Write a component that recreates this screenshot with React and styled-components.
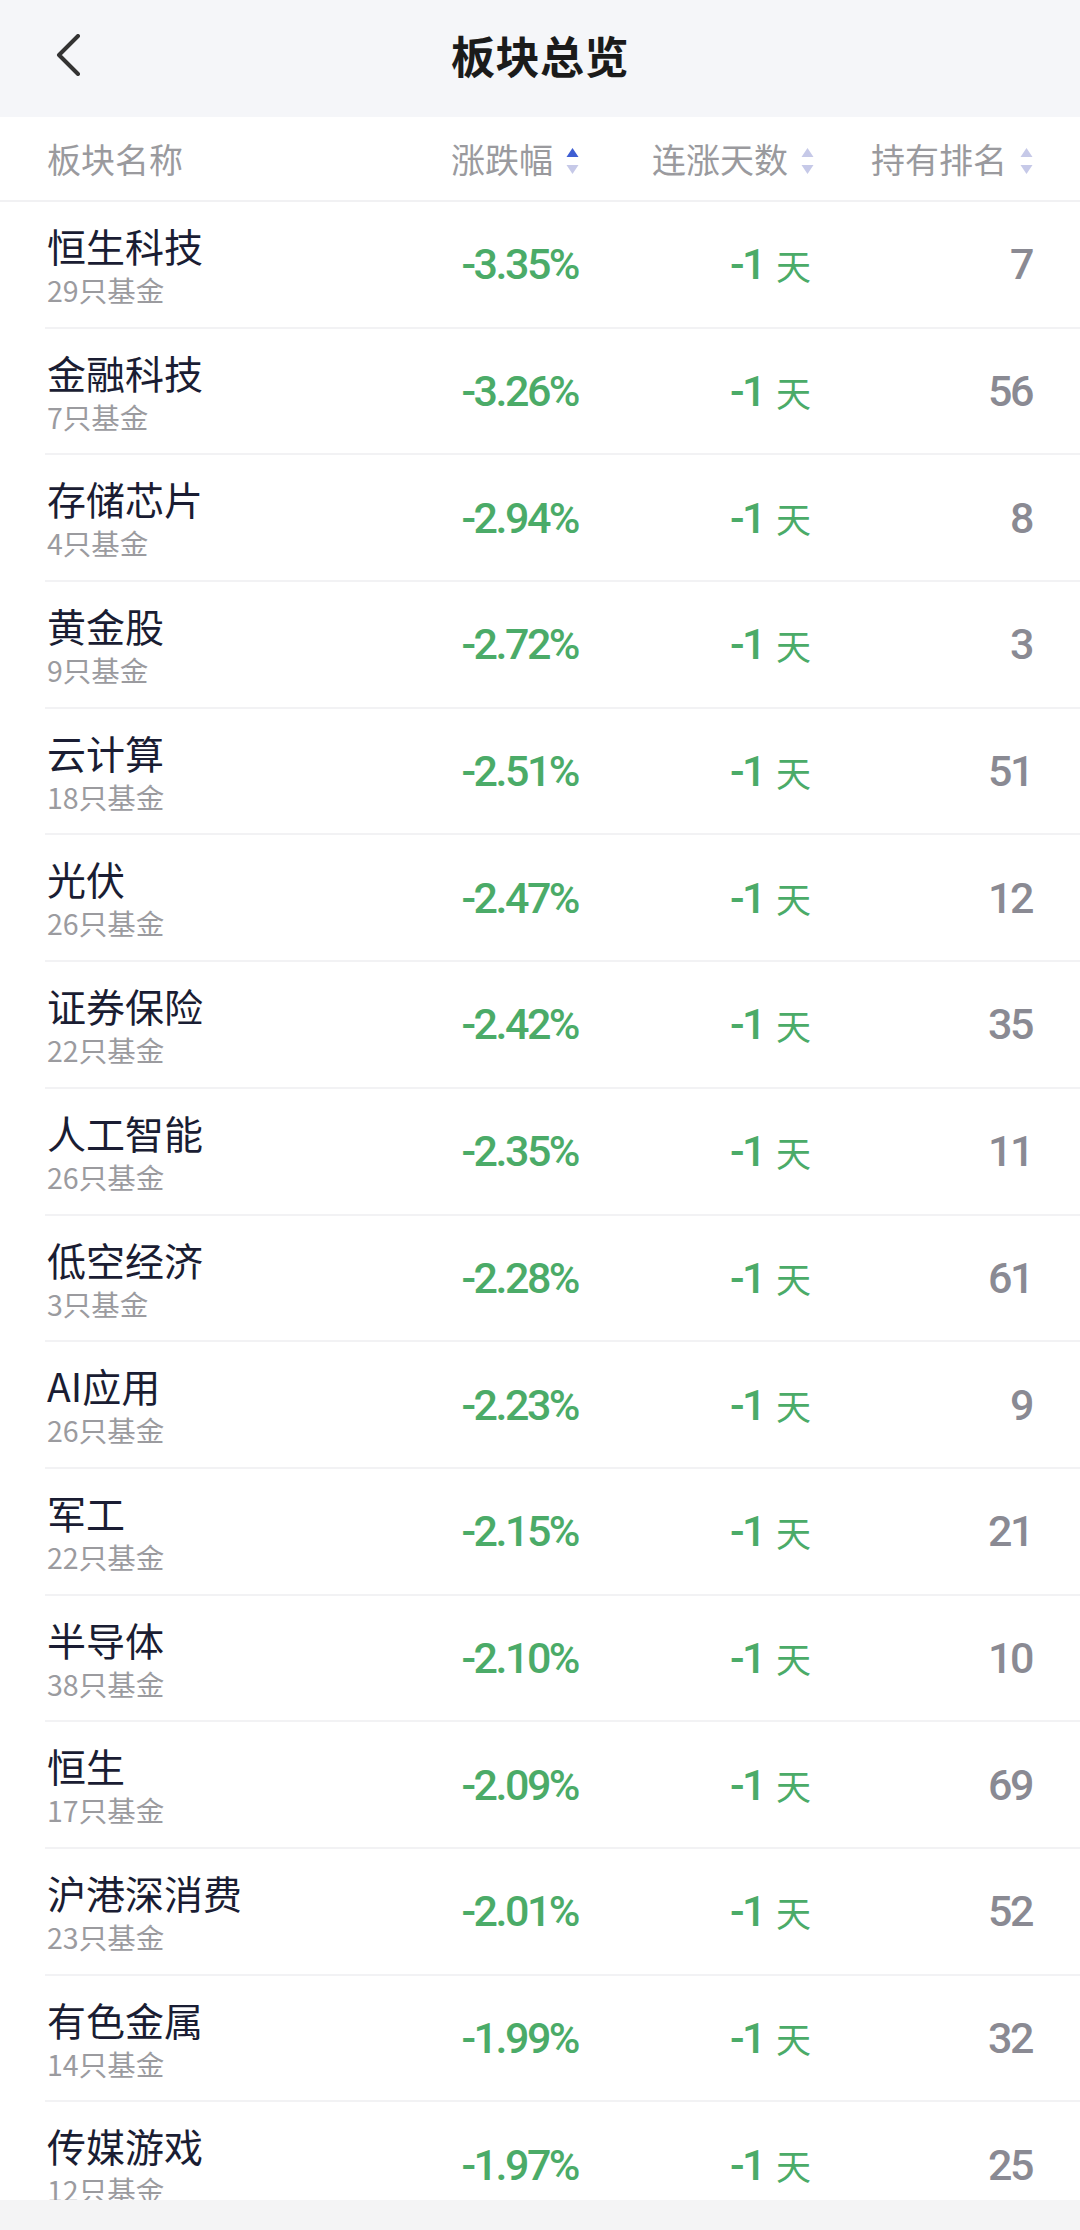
import React from 'react'
import styled, { createGlobalStyle } from 'styled-components'

const GlobalStyle = createGlobalStyle`
  body {
    margin: 0;
    background: #ffffff;
    font-family: 'Noto Sans CJK SC', 'Noto Sans', sans-serif;
  }
`

const rows = [
  ['恒生科技', 29, '-3.35%', 7],
  ['金融科技', 7, '-3.26%', 56],
  ['存储芯片', 4, '-2.94%', 8],
  ['黄金股', 9, '-2.72%', 3],
  ['云计算', 18, '-2.51%', 51],
  ['光伏', 26, '-2.47%', 12],
  ['证券保险', 22, '-2.42%', 35],
  ['人工智能', 26, '-2.35%', 11],
  ['低空经济', 3, '-2.28%', 61],
  ['AI应用', 26, '-2.23%', 9],
  ['军工', 22, '-2.15%', 21],
  ['半导体', 38, '-2.10%', 10],
  ['恒生', 17, '-2.09%', 69],
  ['沪港深消费', 23, '-2.01%', 52],
  ['有色金属', 14, '-1.99%', 32],
  ['传媒游戏', 12, '-1.97%', 25],
]

const SortIcon = ({ active }) => (
  <svg width="15" height="28" viewBox="0 0 15 28">
    <polygon points="1.5,10 7.5,1 13.5,10" fill={active ? '#3e5ed3' : '#c6c9e8'} />
    <polygon points="1.5,18 13.5,18 7.5,27" fill="#c6c9e8" />
  </svg>
)

const App = () => {
  return (
    <Page>
      <GlobalStyle />
      <TopBar>
        <BackButton>
          <svg width="26" height="42" viewBox="0 0 26 42">
            <path d="M22 2 L3 21 L22 40" fill="none" stroke="#333" strokeWidth="4" strokeLinecap="round" strokeLinejoin="round" />
          </svg>
        </BackButton>
        <Title>板块总览</Title>
        <span />
      </TopBar>

      <HeadRow>
        <HeadCell>板块名称</HeadCell>
        <HeadCell align="right">涨跌幅<SortIcon active /></HeadCell>
        <HeadCell align="right">连涨天数<SortIcon /></HeadCell>
        <HeadCell align="right">持有排名<SortIcon /></HeadCell>
      </HeadRow>

      <List>
        {rows.map(([name, count, change, rank]) => (
          <Row key={name}>
            <NameCell>
              <Name>{name}</Name>
              <Sub>{count}只基金</Sub>
            </NameCell>
            <Value green>{change}</Value>
            <Value green pad={4}>
              -1<Unit>天</Unit>
            </Value>
            <Value>{rank}</Value>
          </Row>
        ))}
      </List>

      <BottomBar />
    </Page>
  )
}

const Page = styled.div`
  width: 1080px;
  height: 2230px;
  overflow: hidden;
  display: flex;
  flex-direction: column;
`

const TopBar = styled.div`
  height: 117px;
  box-sizing: border-box;
  padding-bottom: 8px;
  flex-shrink: 0;
  background: #f5f6f9;
  display: grid;
  grid-template-columns: 1fr auto 1fr;
  align-items: center;
`

const BackButton = styled.div`
  padding-left: 56px;
  display: flex;
  align-items: center;
  svg {
    display: block;
  }
`

const Title = styled.div`
  font-size: 44px;
  font-weight: 700;
  color: #1b1b1b;
  letter-spacing: 0.5px;
`

const columns = '1fr 180px 235px 219px'

const HeadRow = styled.div`
  height: 85px;
  flex-shrink: 0;
  box-sizing: border-box;
  display: grid;
  grid-template-columns: ${columns};
  align-items: center;
  padding: 0 46px 0 47px;
  border-bottom: 2px solid #f1f1f3;
`

const HeadCell = styled.div`
  display: flex;
  align-items: center;
  justify-content: ${({ align }) => (align === 'right' ? 'flex-end' : 'flex-start')};
  gap: 12px;
  font-size: 34px;
  color: #9a9a9e;
  svg {
    display: block;
    margin-top: 4px;
  }
`

const List = styled.div`
  flex: 1;
  overflow: hidden;
  padding-left: 45px;
`

const Row = styled.div`
  height: 126.7px;
  box-sizing: border-box;
  display: grid;
  grid-template-columns: ${columns};
  align-items: center;
  padding: 0 46px 0 2px;
  border-bottom: 2px solid #f2f2f4;
`

const NameCell = styled.div`
  align-self: start;
  padding-top: 19px;
  display: flex;
  flex-direction: column;
`

const Name = styled.div`
  font-size: 39px;
  line-height: 48px;
  color: #1a1d33;
`

const Sub = styled.div`
  font-size: 28.5px;
  line-height: 34px;
  margin-top: 4px;
  color: #9b9b9f;
`

const Value = styled.div`
  display: flex;
  align-items: center;
  justify-content: flex-end;
  padding-right: ${({ pad }) => pad || 2}px;
  font-family: Roboto, 'Liberation Sans', sans-serif;
  font-size: 43px;
  font-weight: 500;
  letter-spacing: -2.5px;
  color: ${({ green }) => (green ? '#4bab68' : '#8a8a93')};
`

const Unit = styled.span`
  font-family: 'Noto Sans CJK SC', sans-serif;
  font-size: 35px;
  font-weight: 400;
  letter-spacing: 0;
  margin-left: 12px;
`

const BottomBar = styled.div`
  height: 30px;
  flex-shrink: 0;
  background: #f4f4f5;
`

export default App
